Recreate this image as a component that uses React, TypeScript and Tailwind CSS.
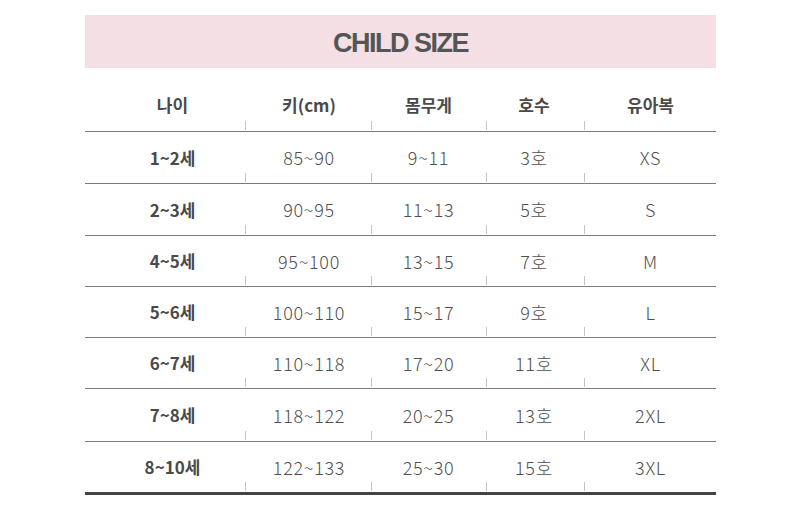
const rows = [
  ["1~2세", "85~90", "9~11", "3호", "XS"],
  ["2~3세", "90~95", "11~13", "5호", "S"],
  ["4~5세", "95~100", "13~15", "7호", "M"],
  ["5~6세", "100~110", "15~17", "9호", "L"],
  ["6~7세", "110~118", "17~20", "11호", "XL"],
  ["7~8세", "118~122", "20~25", "13호", "2XL"],
  ["8~10세", "122~133", "25~30", "15호", "3XL"],
];

const rowHeights = ["h-[52px]", "h-[52px]", "h-[51px]", "h-[51px]", "h-[51px]", "h-[53px]", "h-[53px]"];

const headers = ["나이", "키(cm)", "몸무게", "호수", "유아복"];
const widths = ["w-[161px] pl-[14px]", "w-[126px]", "w-[115px] pr-[2px]", "w-[98px] pr-[4px]", "w-[131px]"];

function Row({ cells, head, last, h }: { cells: string[]; head?: boolean; last?: boolean; h: string }) {
  return (
    <div
      className={`flex ${h} ${head ? "pt-[10px]" : ""} ${
        last ? "border-b-[3px] border-[#444]" : "border-b border-[#7a7a7a]"
      }`}
    >
      {cells.map((c, i) => (
        <div key={i} className={`relative flex items-center justify-center ${widths[i]}`}>
          <span
            className={
              head || i === 0
                ? "font-bold text-[17px] text-[#4a4a4a]"
                : "font-light text-[18px] text-[#505050] tracking-[0.7px]"
            }
          >
            {c}
          </span>
          {i < 4 && <div className="absolute right-0 bottom-[1px] w-px h-[9px] bg-[#c4c4c4]" />}
        </div>
      ))}
    </div>
  );
}

export default function App() {
  return (
    <div
      className="w-[800px] h-[517px] bg-white pt-[15px]"
      style={{ fontFamily: '"Noto Sans CJK KR", "Liberation Sans", sans-serif' }}
    >
      <div className="ml-[85px] w-[631px]">
        <div className="h-[53px] bg-[#f3dfe4] flex items-center justify-center pt-[3px]">
          <span
            className="text-[27px] font-bold text-[#555] tracking-[-1.5px]"
            style={{ fontFamily: '"Liberation Sans", sans-serif' }}
          >
            CHILD SIZE
          </span>
        </div>
        <Row cells={headers} head h="h-[64px]" />
        {rows.map((r, i) => (
          <Row key={i} cells={r} h={rowHeights[i]} last={i === rows.length - 1} />
        ))}
      </div>
    </div>
  );
}
